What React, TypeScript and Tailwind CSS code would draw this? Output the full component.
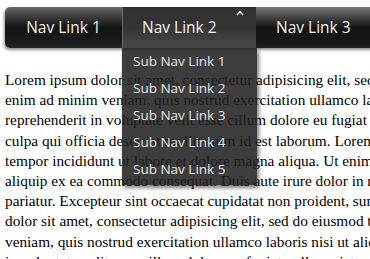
const lines = [
  'Lorem ipsum dolor sit amet, consectetur adipisicing elit, sed do eiusmod',
  'enim ad minim veniam, quis nostrud exercitation ullamco laboris nisi ut aliquip ex ea',
  'reprehenderit in voluptate velit esse cillum dolore eu fugiat nulla pariatur. Excepteur',
  'culpa qui officia deserunt mollit anim id est laborum. Lorem ipsum dolor sit amet,',
  'tempor incididunt ut labore et dolore magna aliqua. Ut enim ad minim veniam, quis',
  'aliquip ex ea commodo consequat. Duis aute irure dolor in reprehenderit in voluptate',
  'pariatur. Excepteur sint occaecat cupidatat non proident, sunt in culpa qui officia',
  'dolor sit amet, consectetur adipisicing elit, sed do eiusmod tempor incididunt ut',
  'veniam, quis nostrud exercitation ullamco laboris nisi ut aliquip ex ea commodo',
  'in voluptate velit esse cillum dolore eu fugiat nulla pariatur. Excepteur sint occaecat',
];

const subLinks = ['Sub Nav Link 1', 'Sub Nav Link 2', 'Sub Nav Link 3', 'Sub Nav Link 4', 'Sub Nav Link 5'];

export default function App() {
  return (
    <div className="relative w-[370px] h-[259px] overflow-hidden bg-white">
      {/* Nav bar */}
      <div className="ml-[5px] mt-[7px] flex h-[41px] w-[400px] rounded-[5px] shadow-[-1px_2px_3px_rgba(0,0,0,0.45)] font-['Open_Sans',sans-serif] text-[15.5px] text-[#f2f2f2]">
        <div className="flex w-[117px] items-center justify-center rounded-l-[5px] bg-[linear-gradient(to_bottom,#6a6a6a_0%,#3a3a3a_25%,#141414_50%,#1a1a1a_85%,#262626_100%)]">
          Nav Link 1
        </div>
        <div className="relative flex w-[134px] items-center border-l border-[#6a6a6a] pl-[19px] bg-[linear-gradient(to_bottom,#303030_0%,#353535_50%,#484848_100%)]">
          Nav Link 2
          <svg className="absolute left-[113px] top-[3px]" width="8" height="6" viewBox="0 0 8 6">
            <path d="M1 5 L4 1.5 L7 5" fill="none" stroke="#f2f2f2" strokeWidth="1.4" />
          </svg>
        </div>
        <div className="flex flex-1 items-center pl-[20px] rounded-r-[5px] bg-[linear-gradient(to_bottom,#7a7a7a_0%,#444_25%,#141414_50%,#161616_85%,#222_100%)]">
          Nav Link 3
        </div>
      </div>

      {/* Body text */}
      <div className="mt-[22px] pl-[5px] font-['Liberation_Serif',serif] text-[15.3px] leading-[20.2px] text-black">
        {lines.map((l, i) => (
          <div key={i} className="whitespace-nowrap">
            {l}
          </div>
        ))}
      </div>

      {/* Dropdown */}
      <div className="absolute left-[122px] top-[48px] w-[135px] h-[137px] bg-[rgba(34,34,34,0.88)] shadow-[2px_3px_4px_rgba(0,0,0,0.5)] font-['Open_Sans',sans-serif] text-[13.5px] text-[#e6e6e6]">
        {subLinks.map((s) => (
          <div key={s} className="flex h-[27px] items-center pl-[11px]">
            {s}
          </div>
        ))}
      </div>
    </div>
  );
}
